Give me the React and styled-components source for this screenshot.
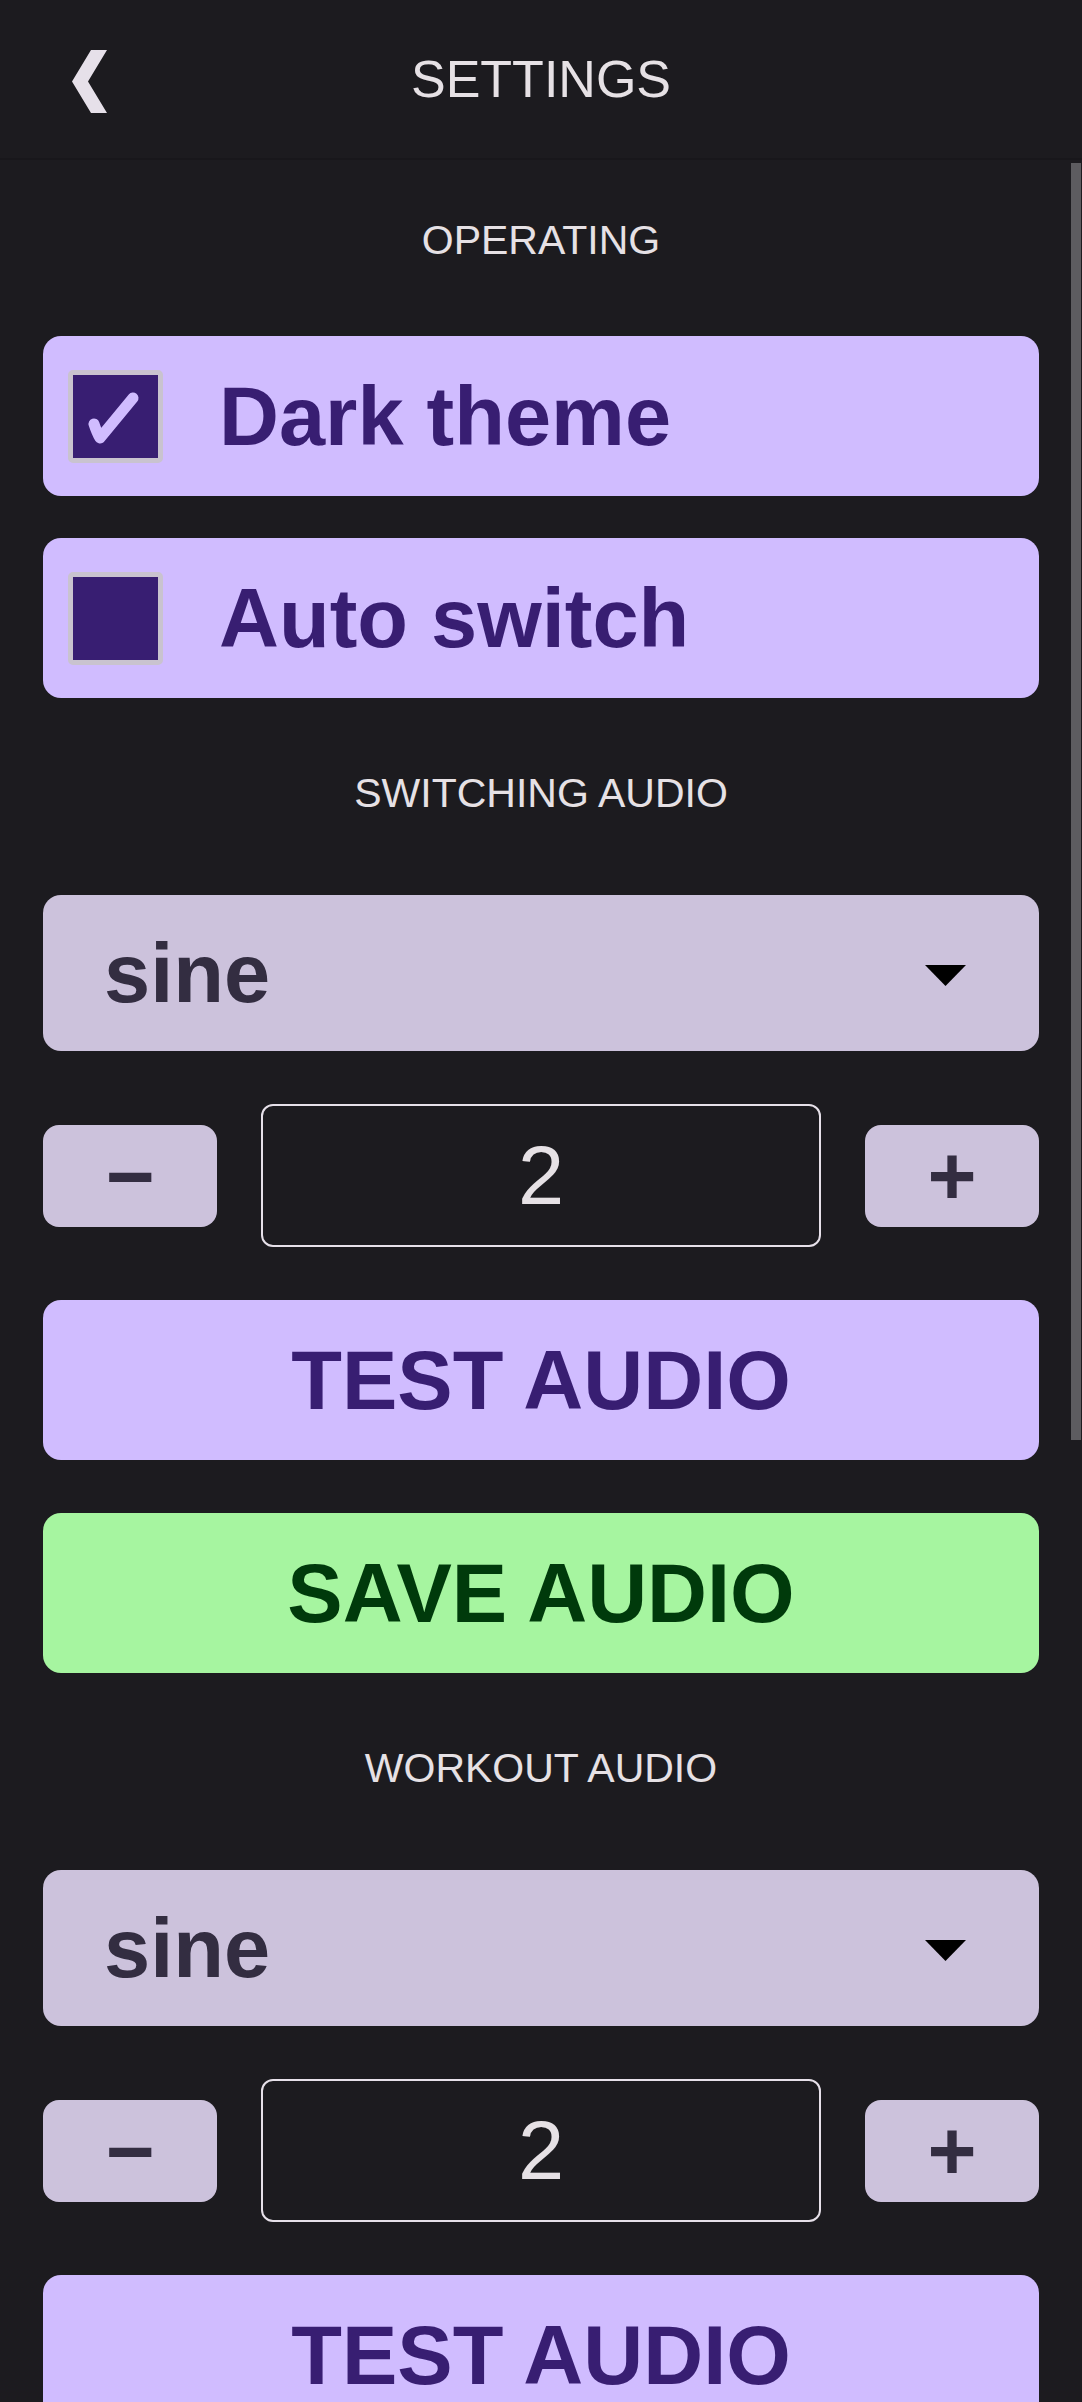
import React from 'react'
import styled, { createGlobalStyle } from 'styled-components'

const GlobalStyle = createGlobalStyle`
  html, body {
    margin: 0;
    padding: 0;
    background: #1c1b1f;
    overflow: hidden;
  }
  body {
    font-family: "Liberation Sans", Arial, sans-serif;
    color: #e6e1e5;
  }
  * {
    box-sizing: border-box;
  }
`

function Settings() {
  return (
    <Page>
      <Header>
        <BackButton aria-label="Back">
          <svg width="36" height="64" viewBox="0 0 36 64">
            <polygon points="35,0 19,0 0,31.5 19,63 35,63 16,31.5" fill="#e6e0e9" />
          </svg>
        </BackButton>
        <HeaderTitle>SETTINGS</HeaderTitle>
        <span />
      </Header>

      <ScrollWrap>
        <ScrollArea>
          <Content>
            <Section>
              <SectionTitle $after={75}>OPERATING</SectionTitle>
              <Stack $gap={42}>
                <CheckCard>
                  <CheckBox>
                    <svg width="85" height="85" viewBox="0 0 85 85">
                      <path
                        d="M22 50 Q25 59 28 64 L61 24"
                        fill="none"
                        stroke="#d0bcff"
                        strokeWidth="11"
                        strokeLinecap="round"
                        strokeLinejoin="round"
                      />
                    </svg>
                  </CheckBox>
                  <CheckLabel>Dark theme</CheckLabel>
                </CheckCard>
                <CheckCard>
                  <CheckBox />
                  <CheckLabel>Auto switch</CheckLabel>
                </CheckCard>
              </Stack>
            </Section>

            <AudioSection title="SWITCHING AUDIO" />
            <AudioSection title="WORKOUT AUDIO" />
          </Content>
        </ScrollArea>
        <ScrollThumb />
      </ScrollWrap>
    </Page>
  )
}

function AudioSection({ title }) {
  return (
    <Section>
      <SectionTitle $after={81}>{title}</SectionTitle>
      <Stack $gap={53}>
        <Select>
          <span>sine</span>
          <svg width="41" height="21" viewBox="0 0 41 21">
            <polygon points="0,0 41,0 20.5,21" fill="#000" />
          </svg>
        </Select>
        <Stepper>
          <StepButton>−</StepButton>
          <ValueBox readOnly value="2" />
          <StepButton>+</StepButton>
        </Stepper>
        <BigButton>TEST AUDIO</BigButton>
        <BigButton $variant="save">SAVE AUDIO</BigButton>
      </Stack>
    </Section>
  )
}

const Page = styled.div`
  height: 100vh;
  display: flex;
  flex-direction: column;
`

const Header = styled.header`
  height: 160px;
  flex: 0 0 160px;
  display: grid;
  grid-template-columns: 1fr auto 1fr;
  align-items: center;
  border-bottom: 2px solid #18171b;
`

const BackButton = styled.button`
  justify-self: start;
  margin-left: 72px;
  margin-top: 6px;
  padding: 0;
  border: 0;
  background: none;
  display: flex;
`

const HeaderTitle = styled.h1`
  margin: 0;
  font-size: 52px;
  font-weight: 400;
  line-height: 1;
  color: #e6e1e5;
`

const ScrollWrap = styled.div`
  position: relative;
  flex: 1;
  min-height: 0;
`

const ScrollArea = styled.div`
  height: 100%;
  overflow-y: auto;
  scrollbar-width: none;

  &::-webkit-scrollbar {
    display: none;
  }
`

const ScrollThumb = styled.div`
  position: absolute;
  top: 3px;
  right: 1px;
  width: 10px;
  height: 1277px;
  background: #5d5c60;
`

const Content = styled.main`
  padding: 60px 43px 120px;
  display: flex;
  flex-direction: column;
  gap: 75px;
`

const Section = styled.section`
  display: flex;
  flex-direction: column;
`

const SectionTitle = styled.h2`
  margin: 0 0 ${(p) => p.$after}px;
  font-size: 41px;
  font-weight: 400;
  line-height: 41px;
  text-align: center;
  color: #e6e1e5;
`

const Stack = styled.div`
  display: flex;
  flex-direction: column;
  gap: ${(p) => p.$gap}px;
`

const CheckCard = styled.label`
  height: 160px;
  display: flex;
  align-items: center;
  gap: 56px;
  padding-left: 25px;
  background: #d0bcff;
  border-radius: 18px;
`

const CheckBox = styled.span`
  width: 95px;
  height: 93px;
  flex: 0 0 95px;
  display: flex;
  background: #381e72;
  border: 5px solid #c9c3cf;
  border-radius: 5px;

  svg {
    margin: -1px 0 0 -1px;
  }
`

const CheckLabel = styled.span`
  font-size: 83px;
  font-weight: 700;
  line-height: 1;
  color: #381e72;
`

const Select = styled.div`
  height: 156px;
  display: flex;
  align-items: center;
  justify-content: space-between;
  padding: 0 73px 0 61px;
  background: #ccc2dc;
  border-radius: 18px;
  font-size: 83px;
  font-weight: 700;
  line-height: 1;
  color: #332d41;

  svg {
    margin-top: 4px;
  }
`

const Stepper = styled.div`
  display: flex;
  align-items: center;
  gap: 44px;
`

const StepButton = styled.button`
  flex: 0 0 174px;
  height: 102px;
  border: 0;
  border-radius: 16px;
  background: #ccc2dc;
  color: #332d41;
  font-family: "Liberation Sans", Arial, sans-serif;
  font-size: 84px;
  font-weight: 700;
  line-height: 1;
  display: flex;
  align-items: center;
  justify-content: center;
  padding: 0;
`

const ValueBox = styled.input`
  flex: 1;
  min-width: 0;
  height: 143px;
  border: 2px solid #e6e0e9;
  border-radius: 12px;
  background: transparent;
  color: #e6e1e5;
  font-family: "Liberation Sans", Arial, sans-serif;
  font-size: 83px;
  text-align: center;
  outline: none;
  padding: 0;
`

const BigButton = styled.button`
  height: 160px;
  border: 0;
  border-radius: 18px;
  background: ${(p) => (p.$variant === 'save' ? '#a6f5a0' : '#d0bcff')};
  color: ${(p) => (p.$variant === 'save' ? '#003a0b' : '#381e72')};
  font-family: "Liberation Sans", Arial, sans-serif;
  font-size: 83px;
  font-weight: 700;
  line-height: 1;
  padding: 0;
`

export default function App() {
  return (
    <>
      <GlobalStyle />
      <Settings />
    </>
  )
}
